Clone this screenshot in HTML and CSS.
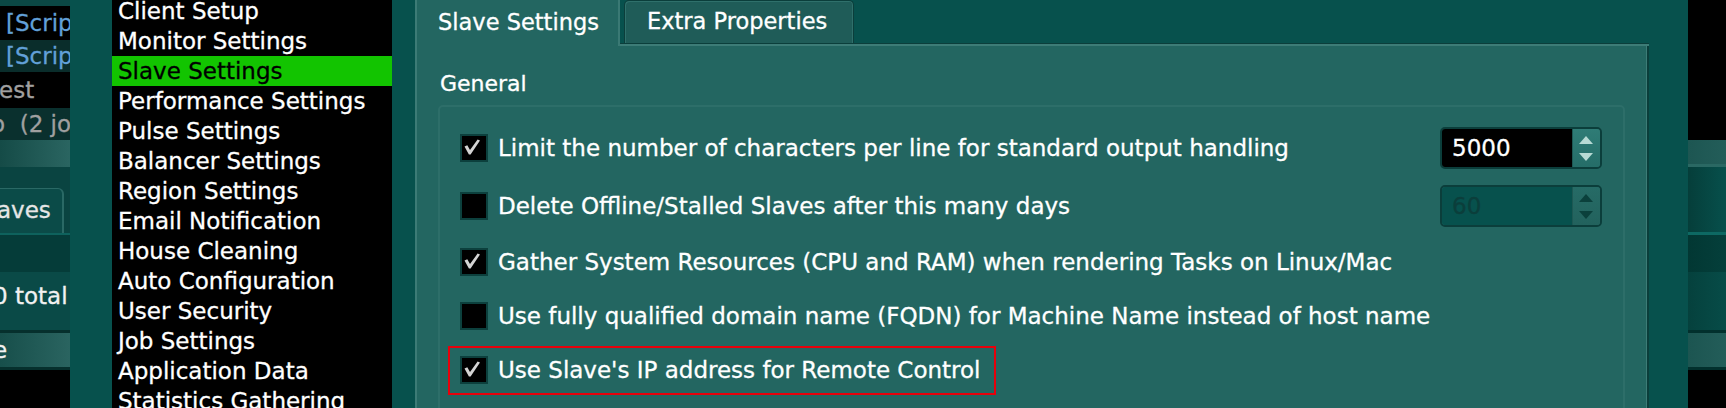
FILE: index.html
```html
<!DOCTYPE html>
<html>
<head>
<meta charset="utf-8">
<title>Repository Options - Slave Settings</title>
<link rel="stylesheet" href="styles.css">
</head>
<body>
<div class="screen">
  <div class="bgwin bgwin-left">
    <div class="bl-top"></div>
    <div class="bl-r1">[Script</div>
    <div class="bl-r2">[Script</div>
    <div class="bl-r3">est</div>
    <div class="bl-r4">o  (2 jobs)</div>
    <div class="bl-bar"></div>
    <div class="bl-tabs"><div class="bl-tab">aves</div></div>
    <div class="bl-line"></div>
    <div class="bl-dark"></div>
    <div class="bl-info">0 total</div>
    <div class="bl-sep"></div>
    <div class="bl-bar2">e</div>
    <div class="bl-sep"></div>
  </div>

  <div class="dialog">
    <ul class="pagelist">
      <li>Client Setup</li>
      <li>Monitor Settings</li>
      <li class="sel">Slave Settings</li>
      <li>Performance Settings</li>
      <li>Pulse Settings</li>
      <li>Balancer Settings</li>
      <li>Region Settings</li>
      <li>Email Notification</li>
      <li>House Cleaning</li>
      <li>Auto Configuration</li>
      <li>User Security</li>
      <li>Job Settings</li>
      <li>Application Data</li>
      <li>Statistics Gathering</li>
    </ul>

    <div class="tabwidget">
      <div class="tabbar">
        <div class="tab tab-active">Slave Settings</div>
        <div class="tab tab-idle">Extra Properties</div>
      </div>
      <div class="pane">
        <div class="grouptitle">General</div>
        <div class="groupbox">
          <div class="row">
            <span class="check"><svg class="tick" viewBox="0 0 24 24" width="24" height="24"><path d="M2.5 10.6 L5.3 9.2 L8 14 L15.6 3.6 L18 4.6 L8.6 18.6 L6.9 18.6 Z"/></svg></span>
            <span class="label">Limit the number of characters per line for standard output handling</span>
            <div class="spin">
              <span class="spin-field">5000</span>
              <span class="spin-btns">
                <svg viewBox="0 0 14 8" width="14" height="8"><path d="M7 0 L14 8 L0 8 Z"/></svg>
                <svg viewBox="0 0 14 8" width="14" height="8"><path d="M0 0 L14 0 L7 8 Z"/></svg>
              </span>
            </div>
          </div>
          <div class="row">
            <span class="check"></span>
            <span class="label">Delete Offline/Stalled Slaves after this many days</span>
            <div class="spin spin-off">
              <span class="spin-field">60</span>
              <span class="spin-btns">
                <svg viewBox="0 0 14 8" width="14" height="8"><path d="M7 0 L14 8 L0 8 Z"/></svg>
                <svg viewBox="0 0 14 8" width="14" height="8"><path d="M0 0 L14 0 L7 8 Z"/></svg>
              </span>
            </div>
          </div>
          <div class="row short">
            <span class="check"><svg class="tick" viewBox="0 0 24 24" width="24" height="24"><path d="M2.5 10.6 L5.3 9.2 L8 14 L15.6 3.6 L18 4.6 L8.6 18.6 L6.9 18.6 Z"/></svg></span>
            <span class="label">Gather System Resources (CPU and RAM) when rendering Tasks on Linux/Mac</span>
          </div>
          <div class="row short">
            <span class="check"></span>
            <span class="label">Use fully qualified domain name (FQDN) for Machine Name instead of host name</span>
          </div>
          <div class="row short">
            <div class="hl">
              <span class="check"><svg class="tick" viewBox="0 0 24 24" width="24" height="24"><path d="M2.5 10.6 L5.3 9.2 L8 14 L15.6 3.6 L18 4.6 L8.6 18.6 L6.9 18.6 Z"/></svg></span>
              <span class="label">Use Slave's IP address for Remote Control</span>
            </div>
          </div>
        </div>
      </div>
    </div>
  </div>

  <div class="bgwin bgwin-right">
    <div class="br-top"></div>
    <div class="br-bar"></div>
    <div class="br-line"></div>
    <div class="br-a"></div>
    <div class="br-line2"></div>
    <div class="br-b"></div>
    <div class="br-c"></div>
    <div class="br-sep"></div>
    <div class="br-d"></div>
    <div class="br-sep"></div>
  </div>
</div>
</body>
</html>
```

FILE: styles.css
```css
html, body {
  margin: 0;
  padding: 0;
  background: #000;
}

.screen {
  display: flex;
  width: 1726px;
  height: 408px;
  overflow: hidden;
  background: #000;
  font-family: "DejaVu Sans", "Noto Sans", sans-serif;
  font-size: 23px;
  color: #fff;
  -webkit-text-stroke: 0.3px currentColor;
}

/* ---------- background window (left) ---------- */
.bgwin {
  flex: none;
  display: flex;
  flex-direction: column;
  overflow: hidden;
  white-space: pre;
}
.bgwin-left { width: 70px; }
.bgwin-right { width: 38px; }

.bl-top { height: 6px; background: #0b4845; }
.bl-r1 { height: 34px; line-height: 34px; background: #000; color: #62a0d8; padding-left: 6px; }
.bl-r2 { height: 32px; line-height: 32px; background: #0a2d2b; color: #62a0d8; padding-left: 6px; }
.bl-r3 { height: 36px; line-height: 36px; background: #000; color: #a0a0a0; text-indent: -1px; }
.bl-r4 { height: 32px; line-height: 32px; background: #0a302e; color: #a0a0a0; text-indent: -9px; }
.bl-bar { height: 27px; background: linear-gradient(to right, #154b47, #2a6561); }
.bl-tabs { height: 66px; box-sizing: border-box; padding-top: 21px; background: #0a4441; }
.bl-tab {
  width: 64px;
  height: 45px;
  box-sizing: border-box;
  background: #0b4b48;
  border-top: 1px solid #2a6965;
  border-right: 2px solid #2a6965;
  border-top-right-radius: 6px;
  line-height: 42px;
  text-indent: -3px;
  color: #e6e6e6;
}
.bl-line { height: 2px; background: #0e625d; }
.bl-dark { height: 37px; background: #053c39; }
.bl-info { height: 58px; line-height: 48px; background: #0a4a47; text-indent: -7px; color: #f2f2f2; }
.bl-sep { height: 3px; background: #06302d; }
.bl-bar2 { height: 34px; line-height: 34px; background: linear-gradient(to right, #174f4b, #2a6460); text-indent: -7px; color: #f2f2f2; }

/* ---------- background window (right) ---------- */
.br-top { height: 140px; background: #000; }
.br-bar { height: 24px; background: linear-gradient(to right, #1d5652, #235d59); }
.br-line { height: 3px; background: #2a6863; }
.br-a { height: 65px; background: linear-gradient(to right, #053e3a, #07504c); }
.br-line2 { height: 3px; background: #0d6963; }
.br-b { height: 37px; background: linear-gradient(to right, #023733, #043f3b); }
.br-c { height: 58px; background: linear-gradient(to right, #05413d, #074c48); }
.br-sep { height: 3px; background: #02302d; }
.br-d { height: 34px; background: linear-gradient(to right, #1c5551, #235d59); }

/* ---------- dialog ---------- */
.dialog {
  flex: none;
  width: 1618px;
  box-sizing: border-box;
  padding-left: 42px;
  background: #07514d;
  display: flex;
}

.pagelist {
  flex: none;
  width: 280px;
  margin: 0;
  padding: 0;
  list-style: none;
  background: #000;
  overflow: hidden;
}
.pagelist li {
  line-height: 30px;
  height: 30px;
  padding-left: 6px;
  white-space: nowrap;
  color: #fff;
}
.pagelist li:first-child { margin-top: -4px; }
.pagelist li.sel { background: #12c400; color: #000; }

.tabwidget {
  flex: none;
  width: 1232px;
  margin-left: 23px;
  border-left: 2px solid #3c7b76;
  display: flex;
  flex-direction: column;
}

.tabbar {
  flex: none;
  height: 46px;
  display: flex;
  align-items: flex-start;
  font-size: 22.5px;
  background: linear-gradient(to bottom, #07514d 43px, #0b3e3b 43px, #0b3e3b 44px, #3d7c77 44px);
}
.tab {
  box-sizing: border-box;
  white-space: nowrap;
  color: #fff;
}
.tab-active {
  width: 203px;
  height: 46px;
  padding: 1px 0 0 21px;
  line-height: 42px;
  background: #236661;
  border-right: 2px solid #3a7974;
}
.tab-idle {
  width: 230px;
  height: 43px;
  margin-left: 4px;
  padding-left: 22px;
  line-height: 40px;
  background: #1f5c58;
  border: 1px solid #0b3e3b;
  border-bottom: none;
  border-radius: 5px 5px 0 0;
  box-shadow: inset 1px 1px 0 #2f706b, inset -1px 0 0 #2f706b;
}

.pane {
  flex: 1;
  background: #236661;
  padding: 0 22px 0 21px;
  border-right: 2px solid #0b3e3b;
  box-shadow: inset -1px 0 0 #3d7c77;
}

.grouptitle {
  margin-top: 23px;
  padding-left: 2px;
  line-height: 30px;
  height: 30px;
  font-size: 22px;
}

.groupbox {
  margin-top: 6px;
  height: 400px;
  box-sizing: border-box;
  border: 2px solid #2d6e69;
  border-radius: 5px;
  padding: 12px 21px 0 20px;
}

.row {
  display: flex;
  align-items: center;
  height: 58px;
}
.row.short { height: 54px; }

.check {
  flex: none;
  width: 28px;
  height: 28px;
  box-sizing: border-box;
  border: 2px solid #0c403d;
  background: #000;
  display: flex;
  align-items: center;
  justify-content: center;
}
.tick { fill: #d4d4d4; }

.label {
  margin-left: 10px;
  white-space: nowrap;
  color: #fff;
}

.spin {
  margin-left: auto;
  flex: none;
  width: 162px;
  height: 42px;
  box-sizing: border-box;
  border: 2px solid #0b3e3b;
  border-radius: 5px;
  display: flex;
  overflow: hidden;
}
.spin-field {
  flex: 1;
  background: #000;
  color: #fff;
  padding-left: 10px;
  line-height: 38px;
}
.spin-btns {
  flex: none;
  width: 28px;
  background: linear-gradient(to bottom, #2f7c76, #256d68);
  box-shadow: inset 1px 0 0 #1d5853;
  display: flex;
  flex-direction: column;
  align-items: center;
  justify-content: center;
  gap: 9px;
}
.spin-btns svg { fill: #b7dad4; display: block; }

.spin-off .spin-field { background: #07514d; color: #0b3e3b; }
.spin-off .spin-btns { background: linear-gradient(to bottom, #266b66, #22625d); }
.spin-off .spin-btns svg { fill: #0b403c; }

.hl {
  display: flex;
  align-items: center;
  height: 49px;
  box-sizing: border-box;
  margin-left: -12px;
  padding: 0 13px 0 10px;
  border: 2px solid #e8000b;
}
```
